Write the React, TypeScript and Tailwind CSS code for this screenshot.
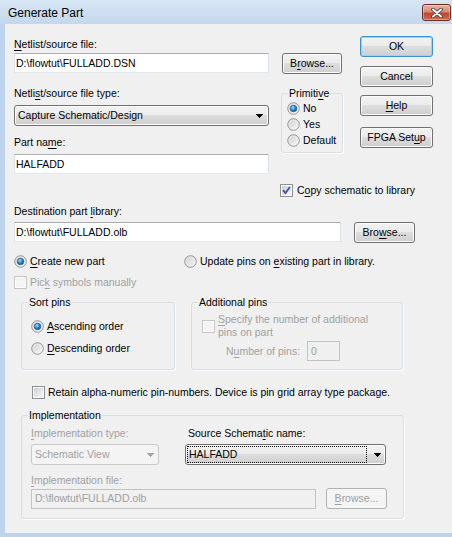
import React from "react";

const DIS = "text-[#a0a0a0]";

function U({ children }: { children: React.ReactNode }) {
  return <span className="underline decoration-1 underline-offset-[2px]">{children}</span>;
}

function Label({ children, className = "" }: { children: React.ReactNode; className?: string }) {
  return <div className={`h-[13px] whitespace-nowrap ${className}`}>{children}</div>;
}

function Radio({ checked = false }: { checked?: boolean }) {
  return (
    <svg width="13" height="13" viewBox="0 0 13 13" className="shrink-0 block">
      <defs>
        <linearGradient id="rb-bg" x1="0" y1="0" x2="1" y2="1">
          <stop offset="0" stopColor="#cdcdcd" />
          <stop offset="1" stopColor="#fbfbfb" />
        </linearGradient>
        <radialGradient id="rb-dot" cx="0.4" cy="0.35" r="0.75">
          <stop offset="0" stopColor="#a9e4ff" />
          <stop offset="0.45" stopColor="#2b8fdc" />
          <stop offset="1" stopColor="#0a4686" />
        </radialGradient>
      </defs>
      <circle cx="6.5" cy="6.5" r="5.75" fill="url(#rb-bg)" stroke="#8f8f8f" strokeWidth="1" />
      <circle cx="6.5" cy="6.5" r="4.6" fill="none" stroke="#ffffff" strokeOpacity="0.5" strokeWidth="0.8" />
      {checked && <circle cx="6.5" cy="6.5" r="3.3" fill="url(#rb-dot)" stroke="#1a4f85" strokeWidth="0.6" />}
    </svg>
  );
}

function Check({ checked = false, disabled = false }: { checked?: boolean; disabled?: boolean }) {
  return (
    <svg width="13" height="13" viewBox="0 0 13 13" className="shrink-0 block">
      <defs>
        <linearGradient id="cb-bg" x1="0" y1="0" x2="1" y2="1">
          <stop offset="0" stopColor="#cbcfd5" />
          <stop offset="1" stopColor="#f7f7f7" />
        </linearGradient>
      </defs>
      <rect x="0.5" y="0.5" width="12" height="12" fill="#fff" stroke={disabled ? "#c6c6c6" : "#8e8f8f"} />
      <rect x="2" y="2" width="9" height="9" fill={disabled ? "#f4f4f4" : "url(#cb-bg)"} />
      {checked && <path d="M3 6.2 L5.4 9 L10 3" fill="none" stroke="#3e55a0" strokeWidth="1.9" />}
    </svg>
  );
}

function Arrow({ color = "#000" }: { color?: string }) {
  return (
    <svg width="7" height="4" viewBox="0 0 7 4" className="shrink-0 block">
      <path d="M0 0H7V1H6V2H5V3H4V4H3V3H2V2H1V1H0Z" fill={color} />
    </svg>
  );
}

function TextBox({ value, className = "", disabled = false }: { value: string; className?: string; disabled?: boolean }) {
  return (
    <div
      className={`flex items-center border pl-[1px] whitespace-nowrap overflow-hidden ${
        disabled
          ? "border-[#c2c2c2] bg-[#f0f0f0] text-[#a0a0a0]"
          : "border-[#abadb3] border-l-[#e2e3ea] border-r-[#dbdfe6] border-b-[#e3e9ef] bg-white"
      } ${className}`}
    >
      {value}
    </div>
  );
}

function Button({
  children,
  className = "",
  isDefault = false,
  disabled = false,
}: {
  children: React.ReactNode;
  className?: string;
  isDefault?: boolean;
  disabled?: boolean;
}) {
  const look = disabled
    ? "border-[#adb2b5] bg-[#f4f4f4] text-[#a0a0a0]"
    : isDefault
    ? "border-[#3592d4] bg-[linear-gradient(#f2f2f2_0%,#ebebeb_49%,#dddddd_50%,#cfcfcf_100%)] shadow-[inset_0_0_0_1px_#8fd9f8]"
    : "border-[#707070] bg-[linear-gradient(#f2f2f2_0%,#ebebeb_49%,#dddddd_50%,#cfcfcf_100%)] shadow-[inset_0_0_0_1px_#fbfbfb]";
  return (
    <div className={`flex items-center justify-center rounded-[3px] border whitespace-nowrap ${look} ${className}`}>
      {children}
    </div>
  );
}

function Group({ title, className = "", children }: { title: React.ReactNode; className?: string; children?: React.ReactNode }) {
  return (
    <fieldset className={`min-w-0 rounded-[3px] border border-[#d5dfe5] shadow-[1px_1px_0_#ffffff] ${className}`}>
      <legend className="ml-[6px] px-[1px] h-[13px] leading-[13px] whitespace-nowrap">{title}</legend>
      {children}
    </fieldset>
  );
}

function CloseButton() {
  return (
    <div className="ml-auto mr-[1px] mt-[4px] w-[29px] h-[17px] rounded-[3px] border border-[#6d2b25] bg-[linear-gradient(#e9b4a6_0%,#d98a74_45%,#c5452c_55%,#d26a4d_100%)] shadow-[inset_0_0_0_1px_rgba(255,255,255,0.35)] flex items-center justify-center">
      <svg width="12" height="10" viewBox="0 0 12 10" className="block">
        <path d="M2 1.5 L10 8.5 M10 1.5 L2 8.5" stroke="#3a3a3a" strokeWidth="3.6" strokeLinecap="round" />
        <path d="M2 1.5 L10 8.5 M10 1.5 L2 8.5" stroke="#ffffff" strokeWidth="2" strokeLinecap="round" />
      </svg>
    </div>
  );
}

export default function App() {
  return (
    <div className="w-[452px] h-[537px] overflow-hidden flex flex-col bg-[#bed4ec] font-['Liberation_Sans',Arial,sans-serif] text-[10.5px] leading-[13px] text-black">
      {/* Title bar */}
      <div className="h-[24px] shrink-0 flex items-start bg-[linear-gradient(#d8e6f4,#c3d7ed)]">
        <div className="ml-[8px] mt-[6px] text-[12px] leading-[14px] whitespace-nowrap">Generate Part</div>
        <CloseButton />
      </div>

      <div className="flex-1 flex pl-[5px] pb-[4px] min-h-0">
        <div className="flex-1 bg-[#f0f0f0] flex flex-col">
          {/* Top section */}
          <div className="flex items-start">
            <div className="ml-[9px] mt-[14px] w-[255px] flex flex-col">
              <Label>
                <U>N</U>etlist/source file:
              </Label>
              <TextBox className="mt-[2px] h-[20px]" value={"D:\\flowtut\\FULLADD.DSN"} />
              <Label className="mt-[14px]">
                Netli<U>s</U>t/source file type:
              </Label>
              <div className="mt-[5px] h-[21px] flex items-center rounded-[3px] border border-[#707070] bg-[linear-gradient(#f2f2f2_0%,#ebebeb_49%,#dddddd_50%,#cfcfcf_100%)] shadow-[inset_0_0_0_1px_#fcfcfc] pr-[5px]">
                <div className="flex-1 pl-[3px] whitespace-nowrap">Capture Schematic/Design</div>
                <Arrow />
              </div>
              <Label className="mt-[10px]">
                Part na<U>m</U>e:
              </Label>
              <TextBox className="mt-[5px] h-[20px]" value="HALFADD" />
            </div>

            <div className="ml-[12px] w-[62px] flex flex-col">
              <Button className="mt-[29px] ml-[1px] w-[60px] h-[21px]">
                B<U>r</U>owse...
              </Button>
              <Group
                className="mt-[13px] h-[66px]"
                title={
                  <>
                    Primiti<U>v</U>e
                  </>
                }
              >
                <div className="flex flex-col pl-[5px]">
                  <div className="h-[16px] flex items-center gap-[3px]">
                    <Radio checked />
                    <span>No</span>
                  </div>
                  <div className="h-[16px] flex items-center gap-[3px]">
                    <Radio />
                    <span>Yes</span>
                  </div>
                  <div className="h-[16px] flex items-center gap-[3px]">
                    <Radio />
                    <span>Default</span>
                  </div>
                </div>
              </Group>
            </div>

            <div className="ml-[17px] w-[73px] flex flex-col">
              <Button isDefault className="mt-[12px] h-[21px]">
                OK
              </Button>
              <Button className="mt-[9px] h-[21px]">Cancel</Button>
              <Button className="mt-[8px] h-[21px]">
                <U>H</U>elp
              </Button>
              <Button className="mt-[11px] h-[21px]">
                FPGA Set<U>u</U>p
              </Button>
            </div>
          </div>

          {/* Copy schematic */}
          <div className="ml-[275px] mt-[10px] h-[13px] flex items-center gap-[4px] whitespace-nowrap">
            <Check checked />
            <span>
              C<U>o</U>py schematic to library
            </span>
          </div>

          {/* Destination */}
          <Label className="ml-[9px] mt-[8px]">
            Destination part <U>l</U>ibrary:
          </Label>
          <div className="ml-[9px] mt-[4px] flex items-start">
            <TextBox className="w-[327px] h-[20px]" value={"D:\\flowtut\\FULLADD.olb"} />
            <Button className="ml-[13px] w-[61px] h-[21px]">
              Bro<U>w</U>se...
            </Button>
          </div>

          {/* Create / Update */}
          <div className="ml-[9px] mt-[12px] h-[13px] flex items-center whitespace-nowrap">
            <div className="w-[170px] flex items-center gap-[3px]">
              <Radio checked />
              <span>
                <U>C</U>reate new part
              </span>
            </div>
            <div className="flex items-center gap-[3px]">
              <Radio />
              <span>
                Update pins on <U>e</U>xisting part in library.
              </span>
            </div>
          </div>

          {/* Pick symbols */}
          <div className={`ml-[9px] mt-[8px] h-[13px] flex items-center gap-[3px] whitespace-nowrap ${DIS}`}>
            <Check disabled />
            <span>
              Pic<U>k</U> symbols manually
            </span>
          </div>

          {/* Groups */}
          <div className="ml-[16px] mt-[7px] flex items-start gap-[16px]">
            <Group title="Sort pins" className="w-[154px] h-[74px]">
              <div className="pl-[9px] flex flex-col whitespace-nowrap">
                <div className="mt-[11px] h-[13px] flex items-center gap-[3px]">
                  <Radio checked />
                  <span>
                    <U>A</U>scending order
                  </span>
                </div>
                <div className="mt-[9px] h-[13px] flex items-center gap-[3px]">
                  <Radio />
                  <span>
                    <U>D</U>escending order
                  </span>
                </div>
              </div>
            </Group>
            <Group title="Additional pins" className="w-[212px] h-[74px]">
              <div className={`pl-[10px] flex flex-col whitespace-nowrap ${DIS}`}>
                <div className="mt-[4px] flex items-center gap-[3px]">
                  <Check disabled />
                  <div className="flex flex-col">
                    <span>
                      <U>S</U>pecify the number of additional
                    </span>
                    <span>pins on part</span>
                  </div>
                </div>
                <div className="mt-[2px] flex items-center">
                  <span className="ml-[24px] w-[81px]">
                    N<U>u</U>mber of pins:
                  </span>
                  <TextBox disabled className="w-[33px] h-[20px] pl-[3px]" value="0" />
                </div>
              </div>
            </Group>
          </div>

          {/* Retain */}
          <div className="ml-[27px] mt-[16px] h-[13px] flex items-center gap-[3px] whitespace-nowrap">
            <Check />
            <span>Retain alpha-numeric pin-numbers. Device is pin grid array type package.</span>
          </div>

          {/* Implementation */}
          <Group title="Implementation" className="ml-[16px] mt-[10px] w-[383px] h-[110px]">
            <div className="pl-[9px] flex flex-col whitespace-nowrap">
              <div className="flex items-start">
                <div className="w-[154px] flex flex-col">
                  <Label className={`mt-[5px] ${DIS}`}>
                    <U>I</U>mplementation type:
                  </Label>
                  <div className="mt-[4px] w-[128px] h-[21px] flex items-center rounded-[3px] border border-[#c9c9c9] bg-[#f4f4f4] text-[#a0a0a0] pr-[4px]">
                    <div className="flex-1 pl-[3px]">Schematic View</div>
                    <Arrow color="#a6a6a6" />
                  </div>
                </div>
                <div className="flex flex-col">
                  <Label className="mt-[5px] ml-[3px]">
                    Source Schema<U>t</U>ic name:
                  </Label>
                  <div className="mt-[4px] w-[201px] h-[21px] flex items-center rounded-[3px] border border-[#707070] bg-[linear-gradient(#f2f2f2_0%,#ebebeb_49%,#dddddd_50%,#cfcfcf_100%)] shadow-[inset_0_0_0_1px_#fcfcfc] pr-[4px]">
                    <div className="ml-[1px] w-[180px] h-[17px] border border-dotted border-black pl-[1px] flex items-center">
                      HALFADD
                    </div>
                    <div className="flex-1" />
                    <Arrow />
                  </div>
                </div>
              </div>
              <Label className={`mt-[9px] ${DIS}`}>
                <U>I</U>mplementation file:
              </Label>
              <div className="mt-[1px] flex items-center">
                <TextBox disabled className="w-[285px] h-[20px] pl-[3px]" value={"D:\\flowtut\\FULLADD.olb"} />
                <Button disabled className="ml-[10px] w-[61px] h-[21px]">
                  <U>B</U>rowse...
                </Button>
              </div>
            </div>
          </Group>
        </div>
      </div>
    </div>
  );
}
